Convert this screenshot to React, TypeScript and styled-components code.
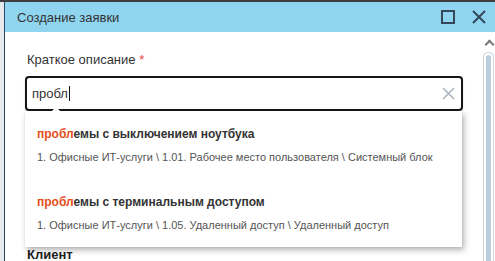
import React from 'react';
import styled, { createGlobalStyle } from 'styled-components';

// ______________________________________________________
//
// @ Data
type Suggestion = { title: string; path: string };

const QUERY = 'пробл';

const SUGGESTIONS: Suggestion[] = [
  {
    title: 'проблемы с выключением ноутбука',
    path: '1. Офисные ИТ-услуги \\ 1.01. Рабочее место пользователя \\ Системный блок',
  },
  {
    title: 'проблемы с терминальным доступом',
    path: '1. Офисные ИТ-услуги \\ 1.05. Удаленный доступ \\ Удаленный доступ',
  },
];

// ______________________________________________________
//
// @ Global
const GlobalStyle = createGlobalStyle`
  html, body {
    margin: 0;
    padding: 0;
    height: 100%;
    overflow: hidden;
  }
  body {
    font-family: "Liberation Sans", Arial, sans-serif;
    background: #e6eaee;
  }
  #root {
    height: 100%;
  }
`;

// ______________________________________________________
//
// @ Component
const Highlight: React.FC<{ text: string; query: string }> = ({ text, query }) => {
  if (!text.startsWith(query)) return <>{text}</>;
  return (
    <>
      <Match>{query}</Match>
      {text.slice(query.length)}
    </>
  );
};

const App: React.FC = () => (
  <>
    <GlobalStyle />
    <Page>
      <Dialog>
        <Header>
          <Title>Создание заявки</Title>
          <HeaderButton aria-label="maximize">
            <svg width="16" height="16" viewBox="0 0 16 16">
              <rect x="2" y="2" width="12" height="12" fill="none" stroke="#35475a" strokeWidth="2" />
            </svg>
          </HeaderButton>
          <HeaderButton aria-label="close">
            <svg width="16" height="16" viewBox="0 0 16 16">
              <path d="M2 2 L14 14 M14 2 L2 14" stroke="#35475a" strokeWidth="2" />
            </svg>
          </HeaderButton>
        </Header>
        <Body>
          <Content>
            <Field>
              <Label>
                Краткое описание <Required>*</Required>
              </Label>
              <InputWrap>
                <Input>
                  <InputText>{QUERY}</InputText>
                  <Caret />
                  <ClearIcon width="13" height="13" viewBox="0 0 13 13">
                    <path d="M1 1 L12 12 M12 1 L1 12" stroke="#a9b3bd" strokeWidth="1.5" />
                  </ClearIcon>
                </Input>
                <Dropdown>
                  <Notch />
                  {SUGGESTIONS.map(s => (
                    <Item key={s.title}>
                      <ItemTitle>
                        <Highlight text={s.title} query={QUERY} />
                      </ItemTitle>
                      <ItemPath>{s.path}</ItemPath>
                    </Item>
                  ))}
                </Dropdown>
              </InputWrap>
            </Field>
            <Field>
              <Label $strong>Клиент</Label>
            </Field>
          </Content>
          <ScrollRail>
            <ScrollArrow />
            <ScrollThumb />
          </ScrollRail>
        </Body>
      </Dialog>
    </Page>
  </>
);

// ______________________________________________________
//
// @ StyledComponent
const Page = styled.div`
  height: 100%;
  box-sizing: border-box;
  border-top: 2px solid #3e3e3e;
  padding-left: 4px;
  display: flex;
`;

const Dialog = styled.div`
  flex: 1;
  display: flex;
  flex-direction: column;
  border-left: 1px solid #2c4762;
  background: #fff;
`;

const Header = styled.div`
  height: 30px;
  flex: 0 0 30px;
  background: #8fd5ef;
  display: flex;
  align-items: center;
  padding: 0 8px 0 12px;
  gap: 15px;
`;

const Title = styled.div`
  flex: 1;
  font-size: 13px;
  color: #333;
`;

const HeaderButton = styled.div`
  width: 16px;
  height: 16px;
  display: flex;
  svg {
    display: block;
  }
`;

const Body = styled.div`
  flex: 1;
  display: flex;
  min-height: 0;
  overflow: hidden;
`;

const Content = styled.div`
  flex: 1;
  padding: 20px 19px 0 20px;
  display: flex;
  flex-direction: column;
  gap: 136px;
`;

const Field = styled.div`
  display: flex;
  flex-direction: column;
  gap: 8px;
`;

const Label = styled.div<{ $strong?: boolean }>`
  font-size: 13px;
  line-height: 16px;
  color: ${p => (p.$strong ? '#222' : '#333')};
  font-weight: ${p => (p.$strong ? 700 : 400)};
  padding-left: 2px;
`;

const Required = styled.span`
  color: #e4473a;
`;

const InputWrap = styled.div`
  position: relative;
`;

const Input = styled.div`
  height: 35px;
  box-sizing: border-box;
  border: 2px solid #161616;
  border-radius: 4px;
  display: flex;
  align-items: center;
  padding: 0 6px 0 5px;
  box-shadow: 0 1px 2px rgba(0, 0, 0, 0.15);
`;

const InputText = styled.span`
  font-size: 13px;
  color: #333;
`;

const Caret = styled.span`
  width: 1px;
  height: 15px;
  background: #111;
  margin-left: 1px;
`;

const ClearIcon = styled.svg`
  margin-left: auto;
  display: block;
`;

const Dropdown = styled.div`
  position: absolute;
  top: 100%;
  left: 0;
  right: 1px;
  background: #fff;
  box-shadow: 2px 3px 6px rgba(0, 0, 0, 0.3), 0 0 1px rgba(0, 0, 0, 0.15);
  z-index: 2;
`;

const Notch = styled.div`
  position: absolute;
  top: -4px;
  left: 26px;
  width: 0;
  height: 0;
  border-left: 5px solid transparent;
  border-right: 5px solid transparent;
  border-bottom: 5px solid #fff;
`;

const Item = styled.div`
  padding: 14px 12px 15px;
  display: flex;
  flex-direction: column;
  gap: 7px;
`;

const ItemTitle = styled.div`
  font-size: 12px;
  line-height: 18px;
  font-weight: 700;
  color: #333;
`;

const Match = styled.span`
  color: #e5501c;
`;

const ItemPath = styled.div`
  font-size: 11px;
  line-height: 14px;
  color: #555;
`;

const ScrollRail = styled.div`
  width: 13px;
  flex: 0 0 13px;
  display: flex;
  flex-direction: column;
  align-items: center;
  padding-top: 7px;
`;

const ScrollArrow = styled.div`
  width: 5px;
  height: 5px;
  border-left: 2px solid #777;
  border-top: 2px solid #777;
  transform: rotate(45deg);
  margin: 2px 0 0 2px;
`;

const ScrollThumb = styled.div`
  margin-top: 4px;
  width: 11px;
  flex: 1;
  box-sizing: border-box;
  border: 1px solid #c8d4db;
  border-bottom: none;
  border-radius: 6px 6px 0 0;
  padding: 2px 2px 0;
  background: #fff;
  &::before {
    content: '';
    display: block;
    height: 100%;
    background: #bacfdb;
    border-radius: 4px 4px 0 0;
  }
`;

export default App;
